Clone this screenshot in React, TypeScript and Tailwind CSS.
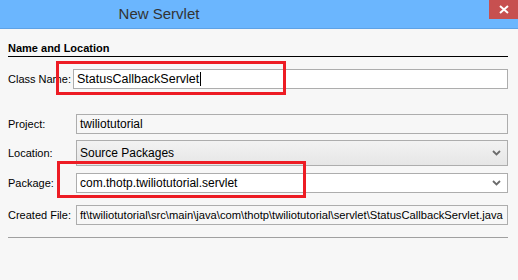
import React from "react";

const font = { fontFamily: '"Liberation Sans", Arial, sans-serif' };

const Chevron = () => (
  <svg width="9" height="6" viewBox="0 0 9 6" className="mr-[6px]">
    <path d="M1 1 L4.5 4.5 L8 1" fill="none" stroke="#6b6b6b" strokeWidth="1.8" />
  </svg>
);

const Row = ({ label, children, className }: { label: string; children: React.ReactNode; className?: string }) => (
  <div className={"flex items-center " + (className || "")}>
    <div className="w-[68px] shrink-0 text-[11px] text-black">{label}</div>
    {children}
  </div>
);

export default function App() {
  return (
    <div className="w-[518px] h-[280px] bg-[#f7f7f7] overflow-hidden relative" style={font}>
      {/* title bar */}
      <div className="h-[29px] bg-[#6bb6fe] border-b border-[#5ea2e6] flex relative">
        <div className="flex-1 flex justify-center pr-[200px] items-center text-[15px] text-[#333] pt-[1px]">New Servlet</div>
        <div className="absolute right-0 top-0 w-[29px] h-[19px] bg-[#c75050] flex items-center justify-center">
          <svg width="10" height="9" viewBox="0 0 10 9">
            <path d="M1 1 L9 8 M9 1 L1 8" stroke="white" strokeWidth="2" />
          </svg>
        </div>
      </div>

      <div className="px-[8px] pr-[10px]">
        <div className="mt-[13px] text-[11px] font-bold text-black leading-[13px] pb-[1px] border-b border-black">
          Name and Location
        </div>

        <div className="flex items-center mt-[12px]">
          <div className="w-[65px] shrink-0 text-[11px] text-black">Class Name:</div>
          <div className="flex-1 h-[20px] bg-white border border-[#adadad] flex items-center pl-[3px] text-[12.5px] text-black">
            StatusCallbackServlet
            <span className="inline-block w-[1px] h-[14px] bg-black ml-[1px]" />
          </div>
        </div>

        <Row label="Project:" className="mt-[25px]">
          <div className="flex-1 h-[20px] border border-[#adadad] flex items-center pl-[3px] text-[12px] text-black">
            twiliotutorial
          </div>
        </Row>

        <Row label="Location:" className="mt-[6px]">
          <div className="flex-1 h-[26px] border border-[#adadad] bg-gradient-to-b from-[#f2f2f2] to-[#e6e6e6] flex items-center justify-between pl-[3px] text-[12px] text-black">
            Source Packages
            <Chevron />
          </div>
        </Row>

        <Row label="Package:" className="mt-[7px]">
          <div className="flex-1 h-[20px] bg-white border border-[#adadad] flex items-center justify-between pl-[3px] text-[12px] text-black">
            com.thotp.twiliotutorial.servlet
            <Chevron />
          </div>
        </Row>

        <Row label="Created File:" className="mt-[12px]">
          <div className="flex-1 h-[20px] border border-[#adadad] flex items-center pl-[3px] text-[11.2px] text-black overflow-hidden whitespace-nowrap">
            {"ft\\twiliotutorial\\src\\main\\java\\com\\thotp\\twiliotutorial\\servlet\\StatusCallbackServlet.java"}
          </div>
        </Row>

        <div className="mt-[12px] border-b border-[#a0a0a0]" />
      </div>

      {/* red highlight boxes */}
      <div className="absolute left-[56px] top-[61px] w-[230px] h-[34px] border-[3px] border-[#ed1c24]" />
      <div className="absolute left-[57px] top-[161px] w-[249px] h-[37px] border-[3px] border-[#ed1c24]" />
    </div>
  );
}
